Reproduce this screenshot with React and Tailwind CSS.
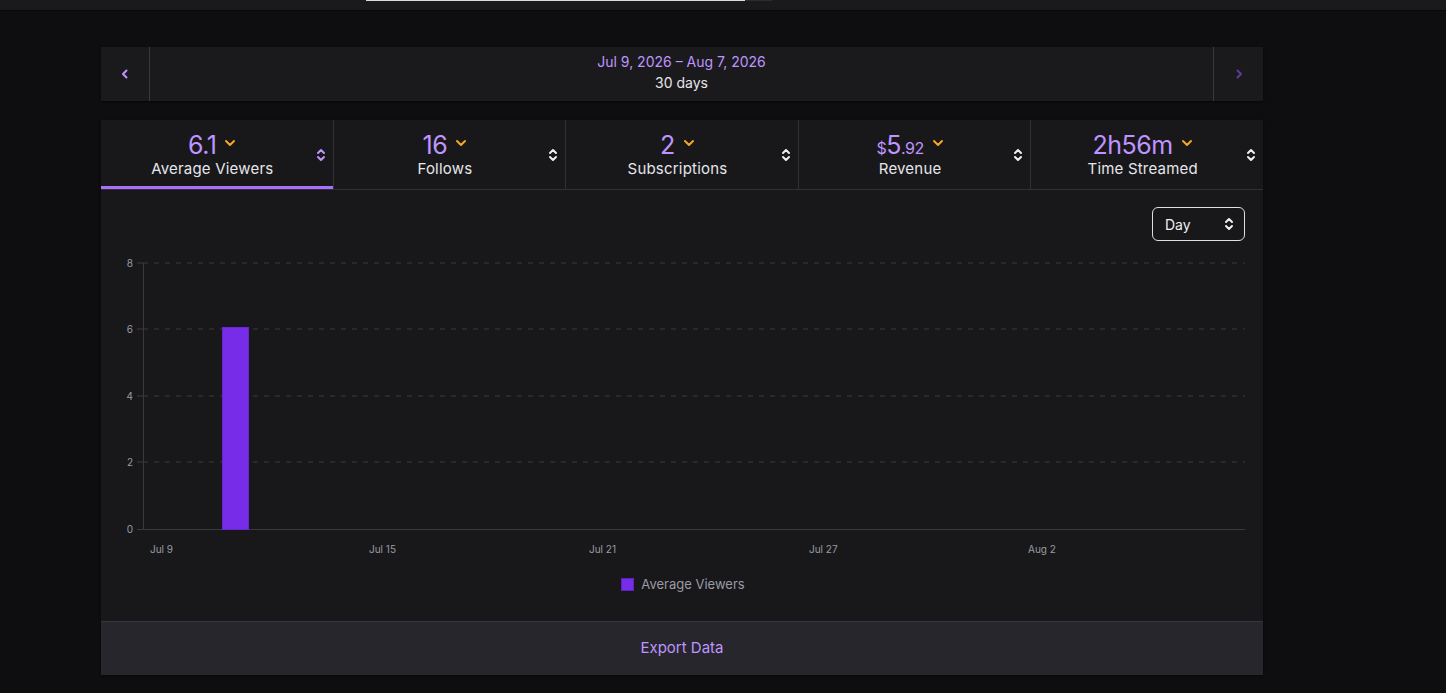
import React from "react";

const font = { fontFamily: "Inter, 'Noto Sans', sans-serif" };

function SortIcon({ color }) {
  return (
    <svg width="10" height="16" viewBox="0 0 10 16" fill="none" stroke={color} strokeWidth="2" strokeLinecap="round" strokeLinejoin="round">
      <path d="M2 6 L5 3 L8 6" />
      <path d="M2 10 L5 13 L8 10" />
    </svg>
  );
}

function ChevronDown() {
  return (
    <svg width="12" height="8" viewBox="0 0 12 8" fill="none" stroke="#f5a623" strokeWidth="2" strokeLinecap="round" strokeLinejoin="round">
      <path d="M2 2 L6 6 L10 2" />
    </svg>
  );
}

function Tab({ value, label, active, last }) {
  return (
    <div className={`relative flex-1 h-[69px] flex items-center ${last ? "" : "border-r border-[#303034]"}`}>
      <div className="flex-1 flex flex-col items-center pl-2">
        <div className="flex items-center gap-[8px] h-[30px]">
          <div className="text-[#bf94ff] text-[25px] leading-none tracking-[-0.5px]">{value}</div>
          <div className="mb-[6px]"><ChevronDown /></div>
        </div>
        <div className="text-[#e6e6ea] text-[15px] leading-[20px] mt-[-2px] tracking-[0.2px]">{label}</div>
      </div>
      <div className="pr-[7px] pt-[1px]">
        <SortIcon color={active ? "#bf94ff" : "#efeff1"} />
      </div>
      {active && <div className="absolute left-0 right-0 bottom-0 h-[3px] bg-[#a970ff]" />}
    </div>
  );
}

function Chart() {
  const grid = [
    { y: 11, l: "8" },
    { y: 77, l: "6" },
    { y: 144, l: "4" },
    { y: 210, l: "2" },
  ];
  const xl = [
    { x: 49, l: "Jul 9" },
    { x: 268, l: "Jul 15" },
    { x: 488, l: "Jul 21" },
    { x: 708, l: "Jul 27" },
    { x: 927, l: "Aug 2" },
  ];
  return (
    <svg width="1162" height="310" viewBox="0 0 1162 310" style={font}>
      {grid.map((g) => (
        <g key={g.l}>
          <line x1="36" x2="42" y1={g.y} y2={g.y} stroke="#3a3a3e" strokeWidth="1" />
          <line x1="42" x2="1144" y1={g.y} y2={g.y} stroke="#3a3a3e" strokeWidth="1" strokeDasharray="5 6" />
          <text x="32" y={g.y + 3.5} textAnchor="end" fontSize="10" fill="#9a9aa3">{g.l}</text>
        </g>
      ))}
      <line x1="42.5" x2="42.5" y1="11" y2="277" stroke="#3a3a3e" strokeWidth="1" />
      <line x1="36" x2="1144" y1="277.5" y2="277.5" stroke="#3a3a3e" strokeWidth="1" />
      <text x="32" y="280.5" textAnchor="end" fontSize="10" fill="#9a9aa3">0</text>
      <rect x="121.5" y="75.5" width="26" height="202" fill="#772ce8" stroke="#6a25d4" strokeWidth="1" />
      {xl.map((t) => (
        <text key={t.l} x={t.x} y="301" fontSize="10" fill="#9a9aa3">{t.l}</text>
      ))}
    </svg>
  );
}

export default function App() {
  return (
    <div className="min-h-[693px] w-full bg-[#0e0e10]" style={font}>
      <div className="h-[11px] bg-[#1a1a1d] border-b border-[#070708] flex items-start">
        <div className="ml-[366px] w-[379px] h-[1px] bg-[#dcdcdc]" />
        <div className="w-[27px] h-[1px] bg-[#2c2c30]" />
      </div>

      <div className="ml-[101px] w-[1162px] mt-[36px] h-[54px] bg-[#1a1a1d] flex shadow-[0_1px_2px_rgba(0,0,0,0.6)]">
        <div className="w-[49px] border-r border-[#3a3a3e] flex items-center justify-center">
          <svg width="8" height="10" viewBox="0 0 8 10" fill="none" stroke="#bf94ff" strokeWidth="2" strokeLinecap="round" strokeLinejoin="round">
            <path d="M5.5 1.5 L2 5 L5.5 8.5" />
          </svg>
        </div>
        <div className="flex-1 flex flex-col items-center justify-center pb-[3px]">
          <div className="text-[#bf94ff] text-[14px] leading-[20px]">Jul 9, 2026 – Aug 7, 2026</div>
          <div className="text-[#e6e6ea] text-[14px] leading-[20px] mt-[1px]">30 days</div>
        </div>
        <div className="w-[50px] border-l border-[#3a3a3e] flex items-center justify-center">
          <svg width="8" height="10" viewBox="0 0 8 10" fill="none" stroke="#5c3d99" strokeWidth="2" strokeLinecap="round" strokeLinejoin="round">
            <path d="M2.5 1.5 L6 5 L2.5 8.5" />
          </svg>
        </div>
      </div>

      <div className="ml-[101px] w-[1162px] mt-[19px] bg-[#18181b] shadow-[0_1px_2px_rgba(0,0,0,0.6)]">
        <div className="flex border-b border-[#303034]">
          <Tab value="6.1" label="Average Viewers" active />
          <Tab value="16" label="Follows" />
          <Tab value="2" label="Subscriptions" />
          <Tab
            value={
              <span className="flex items-baseline">
                <span className="text-[16px]">$</span>
                <span>5</span>
                <span className="text-[16px]">.92</span>
              </span>
            }
            label="Revenue"
          />
          <Tab value="2h56m" label="Time Streamed" last />
        </div>

        <div className="h-[431px] flex flex-col">
          <div className="flex justify-end pt-[17px] pr-[18px]">
            <div className="w-[93px] h-[34px] rounded-[6px] border-[1.5px] border-[#dedee3] flex items-center justify-between pl-[12px] pr-[10px]">
              <span className="text-[#efeff1] text-[14px]">Day</span>
              <SortIcon color="#efeff1" />
            </div>
          </div>
          <div className="mt-[11px]">
            <Chart />
          </div>
          <div className="flex items-center justify-center gap-[7px] mt-[13px] pl-[2px]">
            <div className="w-[13px] h-[13px] bg-[#772ce8] border border-[#5f22bd]" />
            <span className="text-[#9a9aa3] text-[13px]">Average Viewers</span>
          </div>
        </div>

        <div className="h-[54px] bg-[#26262c] border-t border-[#36363c] flex items-center justify-center">
          <span className="text-[#bf94ff] text-[15px]">Export Data</span>
        </div>
      </div>
    </div>
  );
}
